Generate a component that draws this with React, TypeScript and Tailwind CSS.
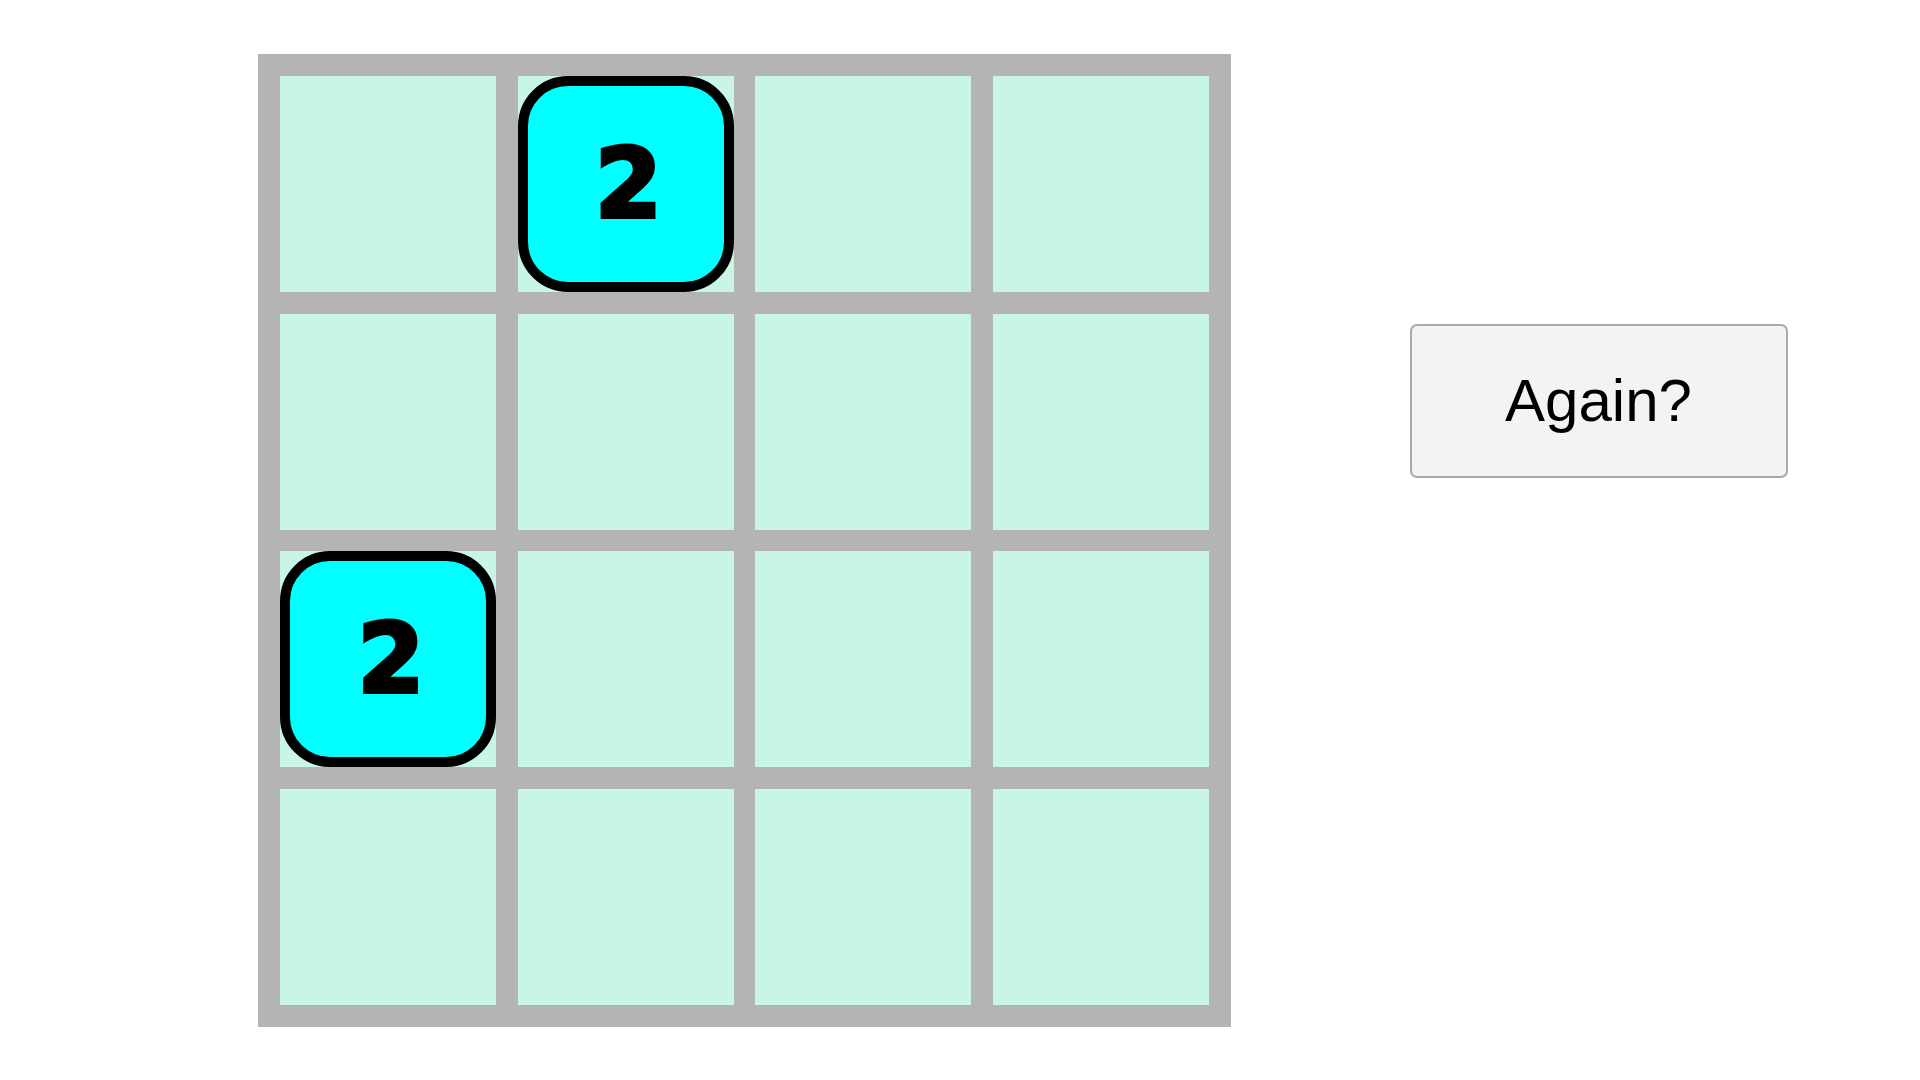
import React from 'react'

// 4x4 board: value per cell, 0 = empty
const board: number[][] = [
  [0, 2, 0, 0],
  [0, 0, 0, 0],
  [2, 0, 0, 0],
  [0, 0, 0, 0],
]

function Tile({ value }: { value: number }) {
  return (
    <div className="flex h-full w-full items-center justify-center rounded-[50px] border-[10px] border-black bg-[#00ffff]">
      <span className="pl-[6px] text-[96px] leading-none font-bold text-black [-webkit-text-stroke:4px_black] [font-family:'DejaVu_Sans',sans-serif]">
        {value}
      </span>
    </div>
  )
}

export default function App() {
  return (
    <div className="flex min-h-screen items-start bg-white pl-[258px] pt-[54px]">
      <div className="grid grid-cols-4 gap-[21.5px] bg-[#b4b4b4] p-[22px]">
        {board.flat().map((value, i) => (
          <div key={i} className="h-[216px] w-[216px] bg-[#c9f5e6]">
            {value > 0 ? <Tile value={value} /> : null}
          </div>
        ))}
      </div>

      <button
        type="button"
        className="ml-[179px] mt-[270px] h-[154px] w-[378px] rounded-[7px] border-2 border-[#a9a9a9] bg-[#f3f3f3] text-[60px] text-black [font-family:'Liberation_Sans',Arial,sans-serif]"
      >
        Again?
      </button>
    </div>
  )
}
